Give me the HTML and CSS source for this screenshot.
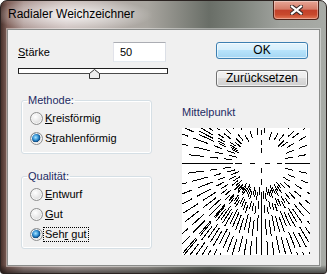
FILE: index.html
```html
<!DOCTYPE html>
<html lang="de">
<head>
  <meta charset="UTF-8">
  <meta name="viewport" content="width=device-width, initial-scale=1.0">
  <title>Radialer Weichzeichner</title>
  <link rel="stylesheet" href="styles.css">
</head>
<body>
  <div class="window">
    <div class="titlebar">
      <span class="title">Radialer Weichzeichner</span>
      <button class="close" aria-label="Schließen">
        <svg width="13" height="10" viewBox="0 0 13 10">
          <path d="M2 1.5 L11 8.5 M11 1.5 L2 8.5" stroke="#3a2a28" stroke-width="4.2" stroke-linecap="square"/>
          <path d="M2 1.5 L11 8.5 M11 1.5 L2 8.5" stroke="#fff" stroke-width="2.2" stroke-linecap="square"/>
        </svg>
      </button>
    </div>

    <div class="client">
      <div class="left">
        <div class="amount-row">
          <label class="amount-label" for="amount"><u>S</u>tärke</label>
          <input class="amount-input" id="amount" type="text" value="50">
        </div>
        <div class="slider">
          <div class="track"></div>
          <svg class="thumb" width="11" height="10" viewBox="0 0 11 10">
            <polygon points="5.5,0.5 10.5,4.5 10.5,9.5 0.5,9.5 0.5,4.5" fill="#ededed" stroke="#333"/>
          </svg>
        </div>

        <fieldset class="group">
          <legend>Methode:</legend>
          <label class="option"><span class="radio"></span><span class="option-text"><u>K</u>reisförmig</span></label>
          <label class="option"><span class="radio checked"></span><span class="option-text">S<u>t</u>rahlenförmig</span></label>
        </fieldset>

        <fieldset class="group group-quality">
          <legend>Qualität:</legend>
          <label class="option"><span class="radio"></span><span class="option-text"><u>E</u>ntwurf</span></label>
          <label class="option"><span class="radio"></span><span class="option-text"><u>G</u>ut</span></label>
          <label class="option"><span class="radio checked"></span><span class="option-text focused">Seh<u>r</u> gut</span></label>
        </fieldset>
      </div>

      <div class="right">
        <button class="btn btn-default">OK</button>
        <button class="btn btn-reset">Zurücksetzen</button>
        <div class="center-label">Mittelpunkt</div>
        <svg class="preview" id="preview" width="128" height="127" viewBox="0 0 128 127" shape-rendering="crispEdges"></svg>
      </div>
    </div>
  </div>

  <script>
    const preview = document.getElementById('preview');
    const W = 128, H = 127;
    const cx = 79, cy = 35;
    const bands = [[27, 35], [41, 49], [55, 71], [77, 94], [99, 119], [124, 150]];

    function addLine(x1, y1, x2, y2) {
      const line = document.createElementNS('http://www.w3.org/2000/svg', 'line');
      line.setAttribute('x1', x1.toFixed(1));
      line.setAttribute('y1', y1.toFixed(1));
      line.setAttribute('x2', x2.toFixed(1));
      line.setAttribute('y2', y2.toFixed(1));
      line.setAttribute('stroke', '#000');
      preview.appendChild(line);
    }

    // rays from the centre to points along the edge, drawn as dashes
    const targets = [];
    for (let x = 3; x < W; x += 8) targets.push([x, 0]);
    for (let x = 2; x < W; x += 6) targets.push([x, H]);
    for (let y = 6; y < H; y += 10) targets.push([0, y], [W, y]);

    targets.forEach(([tx, ty], i) => {
      const dx = tx - cx;
      const dy = ty - cy;
      if (Math.abs(dx) < 3 || Math.abs(dy) < 3) return;
      const len = Math.hypot(dx, dy);
      const ux = dx / len;
      const uy = dy / len;
      const shift = ((i * 37) % 7) - 3;
      bands.forEach(([a, b]) => {
        const start = a + shift;
        if (start >= len) return;
        const end = Math.min(b + shift, len);
        addLine(cx + ux * start, cy + uy * start, cx + ux * end, cy + uy * end);
      });
    });

    // the two axes through the centre
    const y0 = cy + 0.5, x0 = cx + 0.5;
    addLine(0, y0, cx - 28, y0);
    addLine(cx - 26, y0, cx - 19, y0);
    addLine(cx - 11, y0, cx - 6, y0);
    addLine(cx + 4, y0, cx + 9, y0);
    addLine(cx + 16, y0, cx + 21, y0);
    addLine(cx + 24, y0, W, y0);
    addLine(x0, 2, x0, 7);
    addLine(x0, 12, x0, 17);
    addLine(x0, 20, x0, 25);
    addLine(x0, cy + 5, x0, cy + 10);
    addLine(x0, cy + 16, x0, cy + 22);
    addLine(x0, cy + 29, x0, H);
  </script>
</body>
</html>
```

FILE: styles.css
```css
body {
  margin: 0;
  font-family: "Liberation Sans", Arial, sans-serif;
  font-size: 11px;
}

.window {
  width: 327px;
  height: 274px;
  box-sizing: border-box;
  display: flex;
  flex-direction: column;
  padding: 0 6px 7px 6px;
  border: 1px solid #2b2321;
  border-radius: 7px 7px 3px 3px;
  background:
    radial-gradient(ellipse 82px 17px at 70px 14px, rgba(255, 255, 255, 0.85), rgba(255, 255, 255, 0) 100%),
    linear-gradient(to top, rgba(0, 0, 0, 0.55) 0, rgba(0, 0, 0, 0.25) 5px, rgba(0, 0, 0, 0) 8px),
    linear-gradient(90deg, #4a332d 0, #80615a 2%, #ab9692 7%, #c4b6b3 20%, #a9a6a0 45%, #696e67 64%, #7b8079 72%, #a0a39e 86%, #a8aba6 100%);
}

.titlebar {
  height: 28px;
  display: flex;
  justify-content: space-between;
  align-items: flex-start;
}

.title {
  margin: 5px 0 0 1px;
  font-size: 12px;
  line-height: 16px;
  color: #000;
}

.close {
  width: 46px;
  height: 19px;
  margin-right: 1px;
  padding: 0;
  display: flex;
  align-items: center;
  justify-content: center;
  border: 1px solid #4e2219;
  border-top: none;
  border-radius: 0 0 4px 4px;
  background: linear-gradient(#e7a696 0, #d57c68 45%, #c2402a 52%, #c8492d 75%, #e27757 100%);
  box-shadow: inset 0 0 0 1px rgba(255, 255, 255, 0.35);
}

.client {
  flex: 1;
  display: flex;
  padding: 12px 0 0 10px;
  background: #f0f0f0;
  border: 1px solid #8a8c8a;
  box-shadow: 0 0 0 1px rgba(255, 255, 255, 0.4);
}

.left {
  width: 150px;
}

.amount-row {
  height: 20px;
  display: flex;
  align-items: center;
}

.amount-label {
  color: #000;
}

.amount-input {
  width: 53px;
  height: 20px;
  box-sizing: border-box;
  margin: 0 2px 0 auto;
  padding: 0 0 0 6px;
  border: 1px solid;
  border-color: #abadb3 #dbdfe6 #e3e9ef #e2e3ea;
  font-family: "Liberation Sans", Arial, sans-serif;
  font-size: 11px;
  color: #000;
  outline: none;
}

.slider {
  position: relative;
  height: 11px;
  margin-top: 6px;
}

.track {
  height: 6px;
  box-sizing: border-box;
  background: #fff;
  border: 1px solid #1e1e1e;
  border-bottom-color: #4a4a4a;
}

.thumb {
  position: absolute;
  left: 71px;
  top: 1px;
}

.group {
  width: 131px;
  box-sizing: border-box;
  min-width: 0;
  margin: 15px 0 0 3px;
  padding: 1px 0 5px 5px;
  border: 1px solid #d5dfe5;
  border-radius: 3px;
  box-shadow: inset 0 0 0 1px #fff;
}

.group-quality {
  margin-top: 16px;
  padding-bottom: 4px;
}

.group legend {
  padding: 0 1px;
  line-height: 13px;
  color: #1d2a63;
}

.option {
  height: 20px;
  margin-left: 3px;
  display: flex;
  align-items: center;
  color: #000;
}

.radio {
  width: 13px;
  height: 13px;
  box-sizing: border-box;
  margin-right: 1px;
  border: 1px solid #8e8f8f;
  border-radius: 50%;
  background: radial-gradient(circle at 40% 35%, #ffffff 0, #ececec 40%, #cdcdcd 100%);
  box-shadow: inset 0 0 0 1px #f6f6f6;
}

.radio.checked {
  background:
    radial-gradient(circle at 42% 40%, #a9e4ff 0, #3a98d8 28%, #0f5a9a 44%, #174a78 50%, rgba(255, 255, 255, 0) 55%),
    radial-gradient(circle at 40% 35%, #ffffff 0, #ececec 40%, #cdcdcd 100%);
}

.option-text {
  padding: 0 1px;
  line-height: 13px;
}

.option-text.focused {
  outline: 1px dotted #000;
}

.right {
  width: 128px;
  margin-left: 14px;
}

.btn {
  display: block;
  width: 92px;
  height: 17px;
  margin-left: 34px;
  padding: 0;
  font-family: "Liberation Sans", Arial, sans-serif;
  font-size: 12px;
  line-height: 15px;
  color: #000;
  border: 1px solid #707070;
  border-radius: 3px;
  background: linear-gradient(#f2f2f2 0, #ebebeb 50%, #dddddd 50%, #cfcfcf 100%);
  box-shadow: inset 0 0 0 1px rgba(255, 255, 255, 0.7);
}

.btn-default {
  border-color: #3c7fb1;
  background: linear-gradient(#e5f4fc 0, #d4eefc 50%, #b7e3fb 50%, #a4d6f3 100%);
  box-shadow: inset 0 0 0 1px rgba(255, 255, 255, 0.6);
}

.btn-reset {
  margin-top: 11px;
}

.center-label {
  margin-top: 19px;
  line-height: 13px;
  color: #1d2a63;
}

.preview {
  display: block;
  margin-top: 9px;
  background: #fff;
}
```
